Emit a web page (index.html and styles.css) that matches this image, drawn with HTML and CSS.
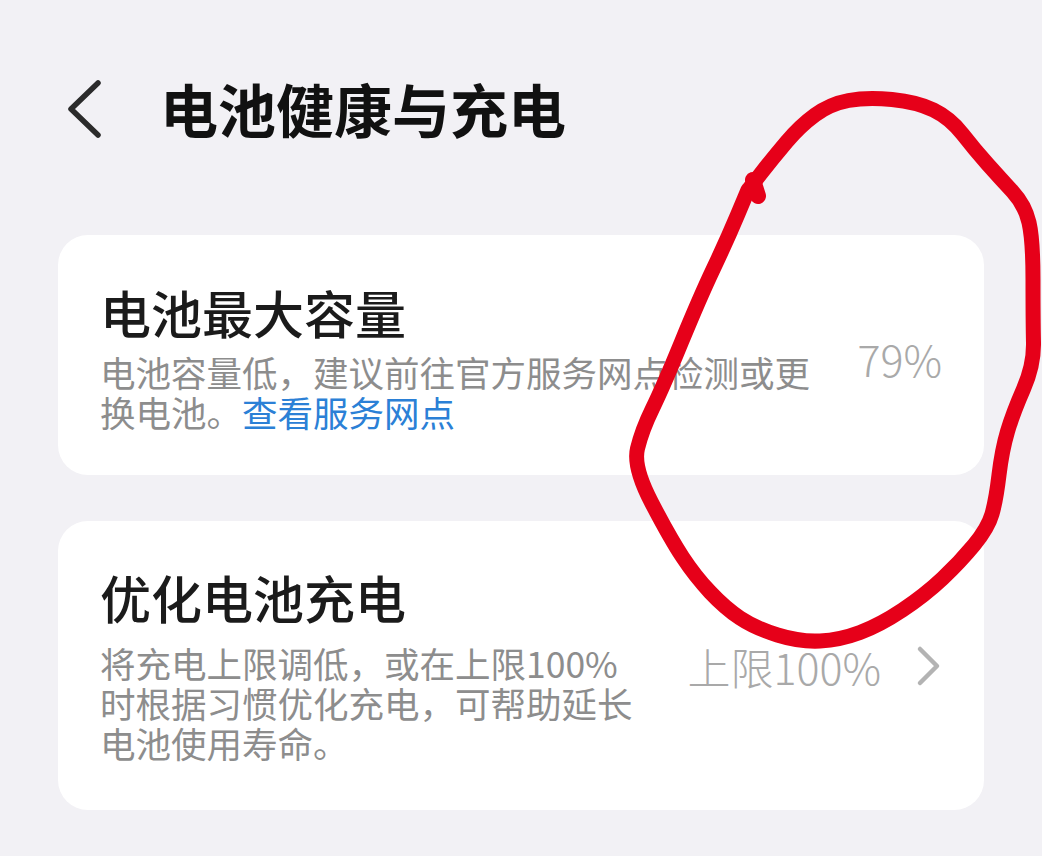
FILE: index.html
```html
<!DOCTYPE html>
<html lang="zh-CN">
<head>
<meta charset="utf-8">
<title>电池健康与充电</title>
<link rel="stylesheet" href="styles.css">
</head>
<body>
<div class="page">
  <header class="topbar">
    <span class="back">
      <svg width="40" height="60" viewBox="0 0 40 60"><polyline points="34,5 7,31 34,57" fill="none" stroke="#2b2b2b" stroke-width="5.5" stroke-linecap="round" stroke-linejoin="round"/></svg>
    </span>
    <h1 class="page-title">电池健康与充电</h1>
  </header>

  <section class="card card-capacity">
    <div class="card-text">
      <div class="card-title">电池最大容量</div>
      <p class="card-desc">电池容量低，建议前往官方服务网点检测或更换电池。<span class="link">查看服务网点</span></p>
    </div>
    <div class="card-value">79%</div>
  </section>

  <section class="card card-charge">
    <div class="card-text">
      <div class="card-title">优化电池充电</div>
      <p class="card-desc">将充电上限调低，或在上限100%时根据习惯优化充电，可帮助延长电池使用寿命。</p>
    </div>
    <div class="card-value">上限100%<svg class="arrow" width="26" height="42" viewBox="0 0 26 42"><polyline points="4,4 21,21 4,38" fill="none" stroke="#b3b3b3" stroke-width="4.5" stroke-linecap="round" stroke-linejoin="round"/></svg></div>
  </section>

  <svg class="annotation" width="1042" height="856" viewBox="0 0 1042 856">
    <path d="M 748 190 L 760.5 174 Q 773 158 786.5 142 Q 800 126 815 115 Q 830 104 848.5 100.5 Q 867 97 892 99.5 Q 917 102 933.5 110 Q 950 118 962.5 134 Q 975 150 987.5 164 Q 1000 178 1012.5 191.5 Q 1025 205 1029 222.5 Q 1033 240 1033 280 Q 1033 320 1033.5 342.5 Q 1034 365 1023.5 389 Q 1013 413 1007.5 431.5 Q 1002 450 999 475 Q 996 500 992 514 Q 988 528 974 545 Q 960 562 942.5 578.5 Q 925 595 902.5 610 Q 880 625 860 632.5 Q 840 640 820 641 Q 800 642 777.5 635 Q 755 628 740 618 Q 725 608 710 592 Q 695 576 682.5 557 Q 670 538 651.5 502.5 Q 633 467 637.5 448.5 Q 642 430 652.5 408.5 Q 663 387 681.5 342 Q 700 297 713.5 268.5 Q 727 240 737.5 215 L 748 190" fill="none" stroke="#e60019" stroke-width="15" stroke-linecap="round" stroke-linejoin="round"/>
    <path d="M 753 180 L 758 196" fill="none" stroke="#e60019" stroke-width="16" stroke-linecap="round"/>
  </svg>
</div>
</body>
</html>
```

FILE: styles.css
```css
html, body {
  margin: 0;
  padding: 0;
  background: #f2f1f5;
}

body {
  font-family: "Noto Sans CJK SC", "Noto Sans", sans-serif;
  color: #1a1a1a;
}

.page {
  position: relative;
  width: 1042px;
  height: 856px;
  overflow: hidden;
  display: flex;
  flex-direction: column;
  gap: 46px;
}

.topbar {
  display: flex;
  align-items: center;
  height: 70px;
  padding: 73px 0 0 64px;
  margin-bottom: 46px;
}

.back {
  display: flex;
  width: 40px;
  height: 60px;
}

.page-title {
  margin: 0 0 0 56px;
  font-size: 58px;
  line-height: 70px;
  font-weight: 700;
  color: #111;
}

.card {
  margin: 0 58px;
  background: #ffffff;
  border-radius: 30px;
  padding: 48px 42px 43px 42px;
  display: flex;
  align-items: center;
}

.card-capacity {
  gap: 36px;
}

.card-charge {
  gap: 50px;
  padding-top: 47px;
  padding-bottom: 47px;
}

.card-text {
  flex: 1;
  min-width: 0;
}

.card-title {
  font-size: 51px;
  line-height: 58px;
  font-weight: 500;
  color: #1b1b1b;
}

.card-desc {
  margin: 11px 0 0 0;
  font-size: 35.5px;
  line-height: 40px;
  color: #8d8d8d;
}

.card-charge .card-desc {
  margin-top: 17px;
}

.link {
  color: #2b80d6;
}

.card-value {
  display: flex;
  align-items: center;
  gap: 35px;
  font-size: 43px;
  font-weight: 300;
  color: #a9a9a9;
  white-space: nowrap;
}

.arrow {
  display: block;
}

.annotation {
  position: absolute;
  left: 0;
  top: 0;
  pointer-events: none;
}
```
